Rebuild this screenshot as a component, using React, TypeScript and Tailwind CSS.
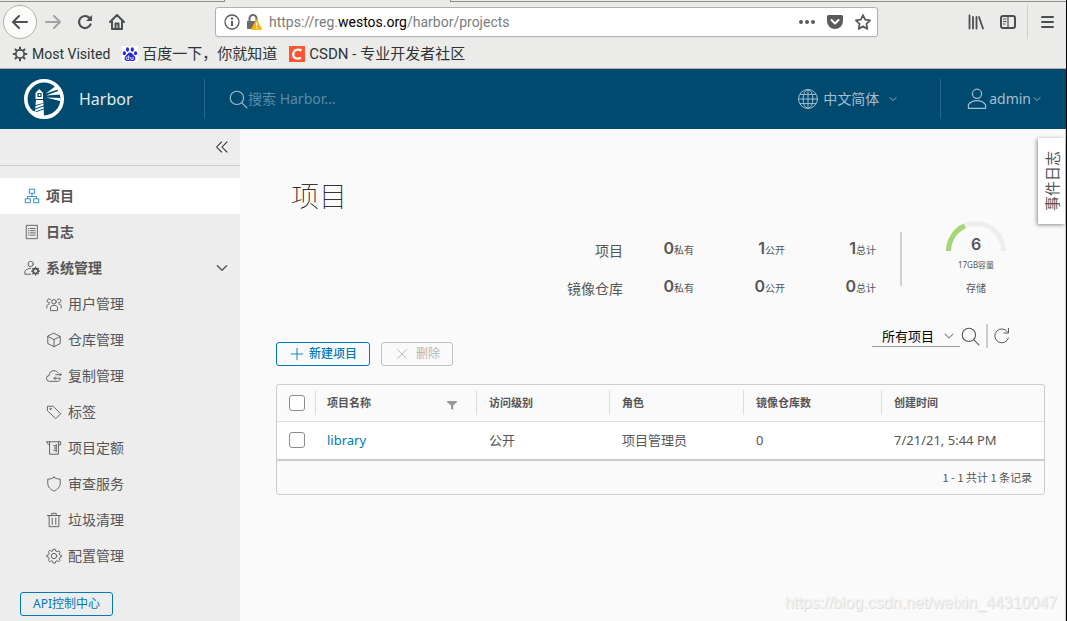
import { useState } from "react";
import type { ReactNode } from "react";
import clsx from "clsx";

type IconProps = {
  className?: string;
  children: ReactNode;
  strokeWidth?: number;
};

// 36 unit grid, same as the Clarity icon set
function Icon({ className, children, strokeWidth = 2 }: IconProps) {
  return (
    <svg
      viewBox="0 0 36 36"
      className={clsx("shrink-0", className)}
      fill="none"
      stroke="currentColor"
      strokeWidth={strokeWidth}
      strokeLinecap="round"
      strokeLinejoin="round"
      aria-hidden="true"
    >
      {children}
    </svg>
  );
}

const gearPath =
  "M18 3l3 0 1 4 3.2 1.4 3.6-2.1 3 3-2.1 3.6L31.200 16l3.800 1v3l-3.800 1-1.500 3.200 2.100 3.600-3 3-3.600-2.100L22 30l-1 4h-5l-1-4-3.200-1.300-3.600 2.100-3-3 2.100-3.600L6 21l-4-1v-4l4-1 1.300-3.200-2.100-3.600 3-3 3.600 2.100L15 7l1-4z";

function SearchIcon({ className }: { className?: string }) {
  return (
    <Icon className={className}>
      <circle cx="16" cy="16" r="12" />
      <path d="M25 25l9 9" />
    </Icon>
  );
}

function Chevron({ className }: { className?: string }) {
  return (
    <Icon className={className} strokeWidth={4}>
      <path d="M4 11l14 14 14-14" />
    </Icon>
  );
}

function HarborLogo() {
  return (
    <svg viewBox="0 0 40 40" className="size-10 shrink-0" aria-hidden="true">
      <circle cx="20" cy="20" r="18.200" fill="none" stroke="#fff" strokeWidth="3.600" />
      <g fill="#fff">
        <path d="M15.300 10l3.700 4v6h-7.500v-6z" />
        <path d="M12 21h7l.5 3-8 2z" />
        <path d="M11.500 27l8-2.500v2l-8.300 3z" />
        <path d="M11.200 30.500l8.500-3v2l-8.700 3z" />
        <path d="M11 33.500l8.800-3v7.500l-9-1z" />
        <path d="M8 31.500l5 1.500 7 2v3.500l-8-2z" />
        <path d="M22 14.500L31 7.500l3 3z" />
        <path d="M22 16.500l13.500-5 1 4z" />
        <path d="M22 18.500l14.500.500-.500 3z" />
      </g>
      <path d="M14 14.500h3v3h-3z" fill="none" stroke="#004a70" strokeWidth="1.200" />
    </svg>
  );
}

function ToolButton({ label, className, children }: { label: string; className?: string; children: ReactNode }) {
  return (
    <button type="button" aria-label={label} className={clsx("flex shrink-0 items-center justify-center text-[#4a4f51]", className)}>
      {children}
    </button>
  );
}

function BrowserBar() {
  return (
    <header className="flex h-[69px] flex-col border-b border-[#b3afab] bg-[#ebebe9] font-['Roboto','Noto_Sans_CJK_SC',sans-serif] text-[#2e3436]">
      <div className="flex h-[2px]">
        <div className="w-[225px] border-r border-b border-[#8f8e8b]" />
        <div className="w-[225px]" />
        <div className="flex-1 border-b border-l border-[#8f8e8b]" />
      </div>
      <div className="flex h-10 items-center pr-1 pl-[3px]">
        <ToolButton label="Back" className="size-[34px] rounded-full border border-[#b0afac] bg-[#fbfbfa]">
          <svg viewBox="0 0 16 16" className="size-4" fill="none" stroke="currentColor" strokeWidth="2" strokeLinecap="round" strokeLinejoin="round">
            <path d="M15 8H1.500M7 2L1 8l6 6" />
          </svg>
        </ToolButton>
        <ToolButton label="Forward" className="ml-2 size-4 opacity-45">
          <svg viewBox="0 0 16 16" className="size-4" fill="none" stroke="currentColor" strokeWidth="2" strokeLinecap="round" strokeLinejoin="round">
            <path d="M1 8h13.500M9 2l6 6-6 6" />
          </svg>
        </ToolButton>
        <ToolButton label="Reload" className="ml-4 size-4">
          <svg viewBox="0 0 16 16" className="size-4" fill="none" stroke="currentColor" strokeWidth="2.200" strokeLinecap="round">
            <path d="M13.500 10.500A6 6 0 1 1 12.500 4" />
            <path d="M15 1v6H9z" fill="currentColor" stroke="none" />
          </svg>
        </ToolButton>
        <ToolButton label="Home" className="ml-4 size-4">
          <svg viewBox="0 0 16 16" className="size-4" fill="none" stroke="currentColor" strokeWidth="2" strokeLinecap="round" strokeLinejoin="round">
            <path d="M1 8l7-7 7 7M3 7.500V15h10V7.500" />
            <path d="M6.500 15V9.500h3V15" />
          </svg>
        </ToolButton>
        <div className="ml-[90px] flex h-[30px] min-w-0 flex-1 items-center rounded-[3px] border border-[#b3b1ae] bg-white pr-1.5 pl-2 text-[#5b5b5b] shadow-xs">
          <svg viewBox="0 0 16 16" className="size-4 shrink-0" fill="none" stroke="currentColor">
            <circle cx="8" cy="8" r="7" strokeWidth="1.300" />
            <path d="M8 7v5" strokeWidth="2" />
            <circle cx="8" cy="4.600" r="1.200" fill="currentColor" stroke="none" />
          </svg>
          <svg viewBox="0 0 16 16" className="ml-1.5 size-4 shrink-0">
            <path d="M3.500 7V4.500a3.500 3.500 0 0 1 7 0V7" fill="none" stroke="#6a6a6a" strokeWidth="2" />
            <path d="M1 7h11v8H1z" fill="#6a6a6a" />
            <path d="M10.500 5.500L16 15.500H5z" fill="#ffb400" stroke="#ffb400" strokeWidth=".6" strokeLinejoin="round" />
            <path d="M10 8.500h1.200v3.500H10zM10 13h1.200v1.300H10z" fill="#fff" />
          </svg>
          <div className="ml-[7px] flex-1 truncate text-[14px] leading-5 text-[#7c7c7c]">
            https://reg.<span className="text-black">westos.org</span>/harbor/projects
          </div>
          <svg viewBox="0 0 18 16" className="h-4 w-[18px] shrink-0" fill="currentColor">
            <circle cx="3" cy="8" r="2" />
            <circle cx="9" cy="8" r="2" />
            <circle cx="15" cy="8" r="2" />
          </svg>
          <svg viewBox="0 0 16 16" className="ml-[11px] size-4 shrink-0">
            <path d="M1.500 1h13A1.500 1.500 0 0 1 16 2.500V7A8 8 0 0 1 0 7V2.500A1.500 1.500 0 0 1 1.500 1z" fill="currentColor" />
            <path d="M4.500 6L8 9.500 11.500 6" fill="none" stroke="#fff" strokeWidth="2" strokeLinecap="round" strokeLinejoin="round" />
          </svg>
          <svg viewBox="0 0 16 16" className="ml-3 size-4 shrink-0" fill="none" stroke="currentColor" strokeWidth="1.800" strokeLinejoin="round">
            <path d="M8 1l2.100 4.700 5 .6-3.700 3.500 1 5.100L8 12.400l-4.400 2.500 1-5.100L.9 6.300l5-.6z" />
          </svg>
        </div>
        <ToolButton label="Library" className="ml-[90px] size-4">
          <svg viewBox="0 0 16 16" className="size-4" fill="none" stroke="currentColor" strokeWidth="1.800" strokeLinecap="round">
            <path d="M1.500 1.500v13M5 3v11.500M8.500 3v11.500M11 3l4 11.500" />
          </svg>
        </ToolButton>
        <ToolButton label="Sidebars" className="ml-4 size-4">
          <svg viewBox="0 0 16 16" className="size-4" fill="none" stroke="currentColor">
            <rect x="1" y="2" width="14" height="12" rx="2" strokeWidth="2" />
            <path d="M8 2v12M3 5h3.500M3 7.500h3.500M3 10h2.500" strokeWidth="1.200" />
          </svg>
        </ToolButton>
        <div className="ml-[11px] h-[34px] w-px bg-[#cfcecb]" />
        <ToolButton label="Menu" className="mr-[7px] ml-[11px] size-4">
          <svg viewBox="0 0 16 16" className="size-4" fill="none" stroke="currentColor" strokeWidth="2" strokeLinecap="round">
            <path d="M3 3h11M3 8h11M3 13h11" />
          </svg>
        </ToolButton>
      </div>
      <div className="flex h-6 items-center gap-3 pl-3 text-[15px] leading-6">
        <a href="#" className="flex items-center gap-1 text-[14px]">
          <svg viewBox="0 0 16 16" className="size-4" fill="none" stroke="#4a4f51">
            <circle cx="8" cy="8" r="4.200" strokeWidth="1.800" />
            <path
              d="M8 .8v2.700M8 12.500v2.700M.8 8h2.700M12.500 8h2.700M2.900 2.900l1.900 1.900M11.200 11.200l1.900 1.900M2.900 13.100l1.900-1.900M11.200 4.800l1.900-1.900"
              strokeWidth="2"
            />
          </svg>
          Most Visited
        </a>
        <a href="#" className="flex items-center gap-1">
          <svg viewBox="0 0 16 16" className="size-4 bg-white" fill="#2529d8">
            <ellipse cx="5.500" cy="3.500" rx="1.600" ry="2.300" />
            <ellipse cx="10.300" cy="3.500" rx="1.600" ry="2.300" />
            <ellipse cx="2.400" cy="7.200" rx="1.600" ry="2" />
            <ellipse cx="13.600" cy="7.200" rx="1.600" ry="2" />
            <path d="M8 6.500c2 0 2.700 2 4.300 3.500 1.800 1.700 1.400 5-1.300 5-1.500 0-2-.3-3-.3s-1.500.3-3 .3c-2.700 0-3.100-3.300-1.300-5C5.300 8.500 6 6.500 8 6.500z" />
            <path d="M6.800 9.500v4H5.500a1.200 1.200 0 0 1 0-2.500h1.300M8.800 11v1.700c0 .8.500.8 1 .8h1.200V11" fill="none" stroke="#fff" strokeWidth=".9" />
          </svg>
          百度一下，你就知道
        </a>
        <a href="#" className="flex items-center gap-1">
          <svg viewBox="0 0 16 16" className="size-4">
            <path d="M0 0h16v16H0z" fill="#fc5531" />
            <path d="M12.500 4.500C9 2.500 4.500 4 4.200 8.200c-.2 4.300 4.300 5.300 7.800 3.600" fill="none" stroke="#fff" strokeWidth="2.200" />
          </svg>
          CSDN - 专业开发者社区
        </a>
      </div>
    </header>
  );
}

function HarborHeader() {
  return (
    <header className="flex h-[60px] items-center bg-[#004a70] pl-6 text-sm text-[#a6bfce]">
      <HarborLogo />
      <span className="ml-[15px] w-[125px] text-base text-[#e3eaef]">Harbor</span>
      <div className="h-10 w-px bg-[#27658a]" />
      <label className="ml-[23px] flex min-w-0 flex-1 items-center">
        <SearchIcon className="size-5 text-[#a6bfce]" />
        <input
          type="text"
          aria-label="搜索"
          placeholder="搜索 Harbor..."
          className="min-w-0 flex-1 bg-transparent leading-5 outline-none placeholder:text-[#5d8ba6]"
        />
      </label>
      <button type="button" className="flex items-center">
        <Icon className="size-[22px]" strokeWidth={1.6}>
          <circle cx="18" cy="18" r="15.500" />
          <ellipse cx="18" cy="18" rx="8" ry="15.500" />
          <path d="M18 2.500v31M2.500 18h31M5 10.500h26M5 25.500h26" />
        </Icon>
        <span className="ml-1 leading-5">中文简体</span>
        <Chevron className="ml-2.5 size-2" />
      </button>
      <div className="ml-[43px] h-10 w-px bg-[#27658a]" />
      <button type="button" className="mr-[25px] ml-[25px] flex items-center">
        <Icon className="size-[22px]">
          <circle cx="18" cy="9.500" r="7.500" />
          <path d="M4 33.500v-6c3-5 8-7 14-7s11 2 14 7v6z" />
        </Icon>
        <span className="ml-px leading-5">admin</span>
        <Chevron className="ml-0.5 size-2" />
      </button>
    </header>
  );
}

const subItems: { label: string; icon: ReactNode }[] = [
  {
    label: "用户管理",
    icon: (
      <>
        <circle cx="18" cy="13" r="5" />
        <path d="M10 32v-7c2-3 5-4 8-4s6 1 8 4v7z" />
        <path d="M11 9a4.500 4.500 0 1 0-3 6.500M25 9a4.500 4.500 0 1 1 3 6.500M2 27v-6c1-2 3-3 5-3M34 27v-6c-1-2-3-3-5-3" />
      </>
    ),
  },
  {
    label: "仓库管理",
    icon: <path d="M18 3l14 7v16l-14 7-14-7V10zM4 10l14 7 14-7M18 17v16" />,
  },
  {
    label: "复制管理",
    icon: (
      <>
        <path d="M32 23c0 4-2 7-6 7H8a6.500 6.500 0 0 1-1-13C7 10 12 6 18 6c4 0 7 2 9 5" />
        <path d="M22 15h12M31 12l3 3-3 3M30 23H18M21 20l-3 3 3 3" />
      </>
    ),
  },
  {
    label: "标签",
    icon: (
      <>
        <path d="M4 5h12l17 17-11 11L4 16z" />
        <circle cx="10" cy="11" r="1.500" />
      </>
    ),
  },
  {
    label: "项目定额",
    icon: (
      <>
        <path d="M2 4h31v7h-5M8 4v28h20V4M2 4c0 4 2 6 6 6" />
        <path d="M17 13h6M19 18h4M17 23h6M23 10v17" />
      </>
    ),
  },
  {
    label: "审查服务",
    icon: <path d="M18 3c4 3 9 4 14 4v9c0 9-6 14-14 18C10 30 4 25 4 16V7c5 0 10-1 14-4z" />,
  },
  {
    label: "垃圾清理",
    icon: <path d="M3 8h30M7 8v25h22V8M13 8V3h10v5M14 14v14M22 14v14" />,
  },
  {
    label: "配置管理",
    icon: (
      <>
        <path d={gearPath} />
        <circle cx="18" cy="18" r="6" />
      </>
    ),
  },
];

function Sidebar() {
  const [open, setOpen] = useState(true);

  return (
    <aside className="w-60 shrink-0 bg-[#ededed] pb-1 text-sm text-[#565656]">
      <div className="flex h-[37px] items-center justify-end border-b border-[#ccc] pr-[11px]">
        <button type="button" aria-label="Collapse" className="text-[#222]">
          <Icon className="size-3.5" strokeWidth={2.6}>
            <path d="M17 5L4 18l13 13M31 5L18 18l13 13" />
          </Icon>
        </button>
      </div>
      <nav className="pt-3 leading-5">
        <a href="#" className="flex h-9 items-center gap-1.5 bg-white pl-6 font-bold">
          <Icon className="size-4 text-[#3a92cb]" strokeWidth={2.4}>
            <path d="M12 3h12v9H12zM3 24h11v9H3zM22 24h11v9H22zM18 12v6M8 24v-5h20v5" />
          </Icon>
          项目
        </a>
        <a href="#" className="flex h-9 items-center gap-1.5 pl-6 font-bold">
          <Icon className="size-4">
            <path d="M6 3h24v30H6zM14 10h11M14 15h11M14 20h11M14 25h11M10 10h1M10 15h1M10 20h1M10 25h1" />
          </Icon>
          日志
        </a>
        <button
          type="button"
          aria-expanded={open}
          onClick={() => setOpen(!open)}
          className="flex h-9 w-full items-center gap-1.5 pr-3 pl-6 font-bold"
        >
          <Icon className="size-4">
            <circle cx="15" cy="9" r="6" />
            <path d="M15 32H2v-7c3-4 8-6 13-6" />
            <circle cx="26" cy="25" r="5.500" strokeWidth="4" />
            <path d="M26 16v3M26 31v3M17 25h3M32 25h3M20 19l2 2M30 29l2 2M20 31l2-2M30 21l2-2" strokeWidth="3" />
          </Icon>
          <span className="flex-1 text-left">系统管理</span>
          <Chevron className="size-3" />
        </button>
        {open &&
          subItems.map((item) => (
            <a key={item.label} href="#" className="flex h-9 items-center gap-1.5 pl-[46px]">
              <Icon className="size-4">{item.icon}</Icon>
              {item.label}
            </a>
          ))}
      </nav>
      <button
        type="button"
        className="mt-[18px] ml-5 h-6 rounded-[3px] border border-[#0079b8] px-3 text-xs leading-5 text-[#0079b8]"
      >
        API控制中心
      </button>
    </aside>
  );
}

const stats = [
  { label: "项目", values: [["0", "私有"], ["1", "公开"], ["1", "总计"]] },
  { label: "镜像仓库", values: [["0", "私有"], ["0", "公开"], ["0", "总计"]] },
];

function Statistics() {
  return (
    <section className="mt-2 flex justify-end pr-[39px]">
      <div className="pt-2.5">
        {stats.map((row) => (
          <div key={row.label} className="flex h-[38px] items-center justify-end leading-5">
            <span className="pt-1 text-sm">{row.label}</span>
            {row.values.map(([count, unit], i) => (
              <span key={unit} className={clsx("text-right text-[10px]", i === 0 ? "w-[71px]" : "w-[91px]")}>
                <b className="font-['Inter'] text-base leading-5 font-semibold">{count}</b>
                {unit}
              </span>
            ))}
          </div>
        ))}
      </div>
      <div className="mt-3 ml-6 h-[54px] w-0.5 bg-[#d0d0d0]" />
      <div className="ml-11 w-[60px] pt-px text-center">
        <div className="relative">
          <svg viewBox="0 0 60 30" className="h-[30px] w-full" fill="none" strokeWidth="5">
            <path d="M2.500 30a27.500 27.500 0 0 1 55 0" stroke="#eee" />
            <path d="M2.500 30a27.500 27.500 0 0 1 16.300-25.100" stroke="#a4d676" />
          </svg>
          <b className="absolute inset-x-0 top-[13px] font-['Inter'] text-base leading-5 font-semibold">6</b>
        </div>
        <div className="mt-2 text-[8px] leading-3">17GB容量</div>
        <div className="mt-[9px] text-[10px] leading-4">存储</div>
      </div>
    </section>
  );
}

function Toolbar() {
  return (
    <div className="mt-[18px] flex h-[42px] items-start justify-between">
      <div className="flex gap-[11px] self-end text-xs leading-5">
        <button type="button" className="flex h-6 items-center rounded-[3px] border border-[#0079b8] px-3 font-medium text-[#0079b8]">
          <Icon className="mr-1 size-4">
            <path d="M18 5v26M5 18h26" />
          </Icon>
          新建项目
        </button>
        <button type="button" disabled className="flex h-6 items-center rounded-[3px] border border-[#c1c1c1] px-3 text-[#b5b5b5]">
          <Icon className="mr-1.5 size-4">
            <path d="M8 8l20 20M28 8L8 28" />
          </Icon>
          删除
        </button>
      </div>
      <div className="flex h-6 items-center pr-[34px]">
        <div className="relative w-[88px]">
          <select
            aria-label="项目过滤"
            className="block h-[22px] w-full appearance-none border-b border-[#999] bg-transparent pl-2.5 text-[13px] leading-5 text-black outline-none"
          >
            <option>所有项目</option>
            <option>私有项目</option>
            <option>公开项目</option>
          </select>
          <Chevron className="pointer-events-none absolute top-1.5 right-1.5 size-2.5 text-[#888]" />
        </div>
        <button type="button" aria-label="搜索">
          <SearchIcon className="size-5" />
        </button>
        <div className="ml-1.5 h-6 w-0.5 bg-[#ccc]" />
        <button type="button" aria-label="刷新" className="ml-[5px]">
          <Icon className="size-[18px]">
            <path d="M31 22A14 14 0 1 1 29 9.500M31 3v9h-9" />
          </Icon>
        </button>
      </div>
    </div>
  );
}

const checkboxClass =
  "block size-4 appearance-none rounded-[3px] border border-[#8c8c8c] bg-white checked:border-[#0079b8] checked:bg-[#0079b8]";

const columns = [
  { label: "项目名称", width: "w-[161px]", filter: true },
  { label: "访问级别", width: "w-[133px]" },
  { label: "角色", width: "w-[134px]" },
  { label: "镜像仓库数", width: "w-[138px]" },
  { label: "创建时间", width: "" },
];

function ProjectTable() {
  return (
    <div className="mt-[18px] rounded-[3px] border border-[#ccc]">
      <table className="w-full table-fixed text-left">
        <thead className="text-[11px] leading-5">
          <tr className="h-9 border-b border-[#ddd]">
            <th className="w-[38px] pl-3">
              <input type="checkbox" aria-label="全选" className={checkboxClass} />
            </th>
            {columns.map((col) => (
              <th key={col.label} className={col.width}>
                <div
                  className={clsx(
                    "flex h-[25px] items-center justify-between border-l border-[#ddd] pr-[19px]",
                    col.filter ? "pl-[11px]" : "pl-3"
                  )}
                >
                  {col.label}
                  {col.filter && (
                    <button type="button" aria-label="过滤">
                      <svg viewBox="0 0 10 10" className="mt-1 size-2.5" fill="#999">
                        <path d="M0 1h10v1L6.200 5.500V10L4 8.800V5.500L0 2z" />
                      </svg>
                    </button>
                  )}
                </div>
              </th>
            ))}
          </tr>
        </thead>
        <tbody className="bg-white text-[13px] leading-5">
          <tr className="h-[38px]">
            <td className="pl-3">
              <input type="checkbox" aria-label="library" className={checkboxClass} />
            </td>
            <td className="pl-3">
              <a href="#" className="text-[#0079b8]">library</a>
            </td>
            <td className="pl-[13px]">公开</td>
            <td className="pl-[13px]">项目管理员</td>
            <td className="pl-[13px]">0</td>
            <td className="pl-[13px]">7/21/21, 5:44 PM</td>
          </tr>
        </tbody>
      </table>
      <div className="flex h-[35px] items-center justify-end border-t-2 border-[#ccc] pr-3 pb-0.5 font-['Noto_Sans_CJK_SC',sans-serif] text-[11px] leading-5">
        1 - 1 共计 1 条记录
      </div>
    </div>
  );
}

export default function App() {
  return (
    <div
      lang="zh-CN"
      className="flex min-h-screen flex-col border-r border-black bg-[#fafafa] font-['Noto_Sans','Noto_Sans_CJK_SC',sans-serif] text-[#565656]"
    >
      <BrowserBar />
      <HarborHeader />
      <div className="relative flex flex-1 border-r border-[#ccc]">
        <Sidebar />
        <main className="min-w-0 flex-1 pt-[51px] pr-5 pl-9">
          <h1 className="pl-[15px] text-[28px] leading-8 font-thin text-black">项目</h1>
          <Statistics />
          <Toolbar />
          <ProjectTable />
        </main>
        <button
          type="button"
          className="absolute top-[9px] right-0 flex h-[86px] w-[27px] items-center justify-center bg-white shadow-[-1px_1px_4px_rgba(0,0,0,0.45)]"
        >
          <span className="rotate-180 text-[15px] leading-5 [text-orientation:sideways] [writing-mode:vertical-rl]">事件日志</span>
        </button>
        <div className="pointer-events-none absolute right-2 bottom-2 font-['Liberation_Sans',sans-serif] text-base leading-5 text-[#f2f2f2] [text-shadow:1px_1px_1px_#d8d8d8]">
          https://blog.csdn.net/weixin_44310047
        </div>
      </div>
    </div>
  );
}
